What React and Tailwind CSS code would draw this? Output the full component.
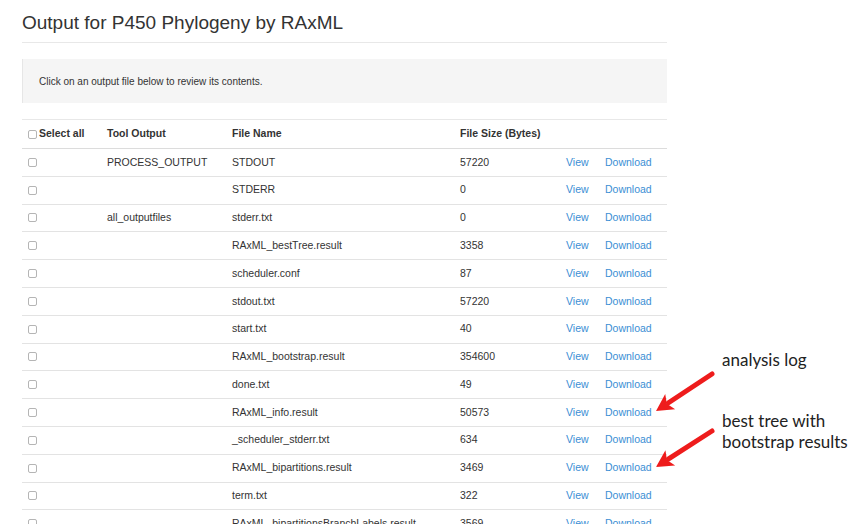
import React from 'react';

const rows = [
  { tool: 'PROCESS_OUTPUT', name: 'STDOUT', size: '57220' },
  { tool: '', name: 'STDERR', size: '0' },
  { tool: 'all_outputfiles', name: 'stderr.txt', size: '0' },
  { tool: '', name: 'RAxML_bestTree.result', size: '3358' },
  { tool: '', name: 'scheduler.conf', size: '87' },
  { tool: '', name: 'stdout.txt', size: '57220' },
  { tool: '', name: 'start.txt', size: '40' },
  { tool: '', name: 'RAxML_bootstrap.result', size: '354600' },
  { tool: '', name: 'done.txt', size: '49' },
  { tool: '', name: 'RAxML_info.result', size: '50573' },
  { tool: '', name: '_scheduler_stderr.txt', size: '634' },
  { tool: '', name: 'RAxML_bipartitions.result', size: '3469' },
  { tool: '', name: 'term.txt', size: '322' },
  { tool: '', name: 'RAxML_bipartitionsBranchLabels.result', size: '3569' },
];

const cols = 'grid grid-cols-[85px_125px_228px_106px_39px_1fr] items-center';

const Box = () => (
  <span className="inline-block w-[9px] h-[9px] border border-[#b5b5b5] rounded-[2px] bg-white shrink-0" />
);

const Arrow = ({ x1, y1, x2, y2 }) => {
  const dx = x2 - x1;
  const dy = y2 - y1;
  const len = Math.hypot(dx, dy);
  const ux = dx / len;
  const uy = dy / len;
  const px = -uy;
  const py = ux;
  const headLen = 17;
  const headW = 9;
  const bx = x2 - ux * headLen;
  const by = y2 - uy * headLen;
  return (
    <g>
      <line x1={x1} y1={y1} x2={bx + ux * 2} y2={by + uy * 2} stroke="#ee1c1c" strokeWidth="5" strokeLinecap="round" />
      <polygon
        points={`${x2},${y2} ${bx + px * headW},${by + py * headW} ${bx + ux * 4},${by + uy * 4} ${bx - px * headW},${by - py * headW}`}
        fill="#ee1c1c"
      />
    </g>
  );
};

const App = () => {
  return (
    <div className="relative w-[864px] h-[524px] overflow-hidden bg-white font-['Liberation_Sans',Arial,sans-serif] text-[#333]">
      <div className="ml-[22px] w-[645px]">
        <h1 className="pt-[10px] h-[43px] text-[19px] leading-[26px] text-[#333] border-b border-[#e8e8e8]">
          Output for P450 Phylogeny by RAxML
        </h1>
        <div className="mt-[16px] h-[44px] flex items-center pl-[16px] bg-[#f5f5f5] border-l border-[#e6e6e6] text-[10px]">
          Click on an output file below to review its contents.
        </div>
        <div className="mt-[16px] border-t border-[#e8e8e8]">
          <div className={`${cols} h-[29px] border-b border-[#dcdcdc] text-[10.5px] font-bold`}>
            <div className="flex items-center gap-[2px] pl-[6px]">
              <Box />
              <span>Select all</span>
            </div>
            <div>Tool Output</div>
            <div>File Name</div>
            <div>File Size (Bytes)</div>
            <div />
            <div />
          </div>
          {rows.map((r, i) => (
            <div key={i} className={`${cols} h-[27.8px] border-b border-[#e3e3e3] text-[10.5px]`}>
              <div className="flex items-center pl-[6px]">
                <Box />
              </div>
              <div>{r.tool}</div>
              <div className="whitespace-nowrap">{r.name}</div>
              <div>{r.size}</div>
              <div className="text-[#3b8ed4]">View</div>
              <div className="text-[#3b8ed4]">Download</div>
            </div>
          ))}
        </div>
      </div>

      <svg className="absolute inset-0" width="864" height="524">
        <Arrow x1={712} y1={374} x2={656} y2={411} />
        <Arrow x1={712} y1={431} x2={656} y2={467} />
      </svg>

      <div className="absolute left-[722px] top-[349px] font-['Lato',sans-serif] text-[17px] leading-[21px] text-[#222]">
        analysis log
      </div>
      <div className="absolute left-[722px] top-[410px] font-['Lato',sans-serif] text-[17px] leading-[21px] text-[#222]">
        best tree with
        <br />
        bootstrap results
      </div>
    </div>
  );
};

export default App;
